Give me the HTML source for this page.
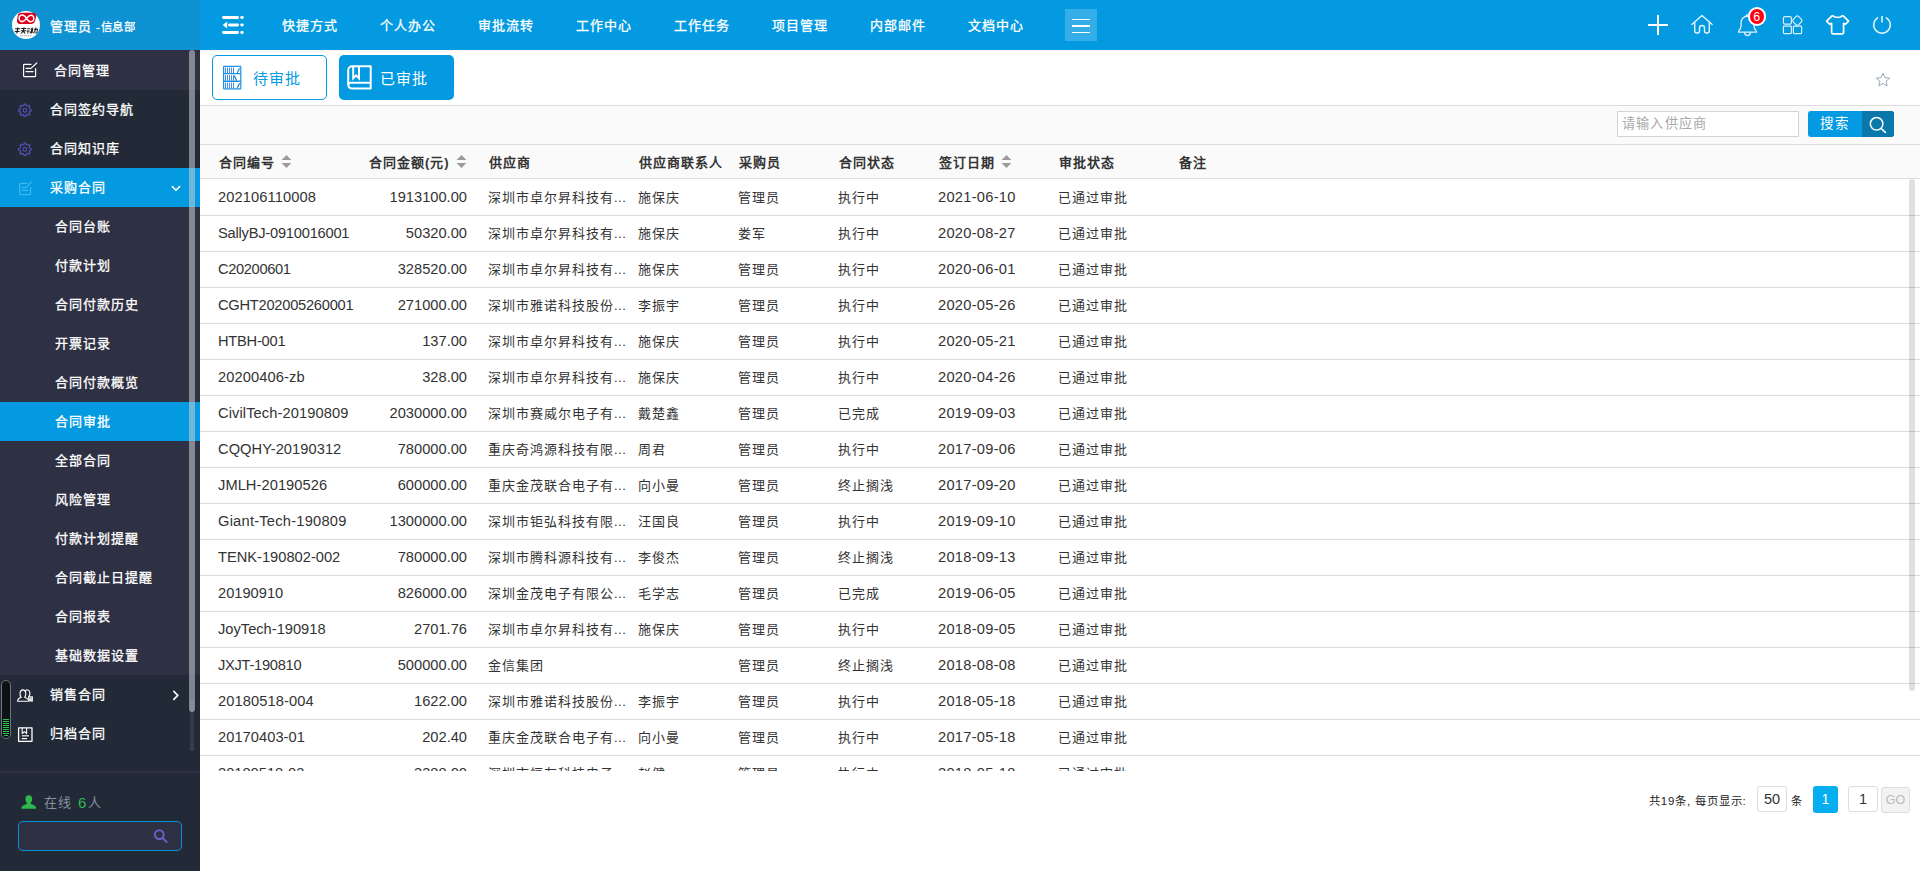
<!DOCTYPE html>
<html lang="zh-CN">
<head>
<meta charset="utf-8">
<title>合同审批</title>
<style>
*{margin:0;padding:0;box-sizing:border-box}
html,body{width:1920px;height:871px;overflow:hidden;background:#fff}
body{position:relative;font-family:"Liberation Sans",sans-serif;font-size:14px;color:#333;-webkit-font-smoothing:antialiased}
.a{position:absolute}
svg{position:absolute;overflow:visible}
.t{position:absolute;white-space:nowrap;line-height:20px;height:20px}
/* top bar */
#top{left:0;top:0;width:1920px;height:50px;background:#039ae1}
#tophdr{left:0;top:0;width:200px;height:50px;background:#0f92d1}
.z{font-size:13px;letter-spacing:1px}
.z16{font-size:15px;letter-spacing:1px}
.z12{font-size:11.2px;letter-spacing:.8px}
.nav{color:#fff;top:16px;-webkit-text-stroke:.3px #fff}
/* sidebar */
#side{left:0;top:50px;width:200px;height:821px;background:#222a37}
.si{position:absolute;left:0;width:200px;height:39px}
.si .t{color:#fff;font-size:13px;letter-spacing:1px;top:10px;-webkit-text-stroke:.3px #fff}
.sub{background:#2e3043}
.act{background:#039ae1}
/* table */
.hd{font-weight:bold;color:#333;font-size:13px;letter-spacing:1px;top:152.5px}
.c{color:#333;font-size:13px;letter-spacing:1px}
.l{font-size:14.66px;letter-spacing:0}
.ln{position:absolute;left:200px;width:1720px;height:1px;background:#dcdcdc}
</style>
</head>
<body>
<div id="top" class="a"></div><div id="tophdr" class="a"></div>
<svg style="left:12px;top:11px" width="28" height="28" viewBox="0 0 28 28">
<circle cx="14" cy="14" r="14" fill="#fff"/>
<path d="M8.6 1.7 H21 a3.2 3.2 0 0 1 3.1 4 l-1.1 4.600 a3.600 3.600 0 0 1 -3.500 2.700 H8 a3 3 0 0 1 -3 -3.600 l.7 -4.600 A3.400 3.400 0 0 1 8.600 1.700z" fill="#d9001b"/>
<path d="M14.5 7.4 C12.8 4.6 10.6 3.6 8.9 4.3 C6.6 5.2 6.4 9 8.6 10.2 C10.6 11.3 12.8 9.9 14.5 7.4 C16.2 4.9 18.3 3.5 20.3 4.5 C22.5 5.6 22.3 9.4 20.1 10.4 C18.3 11.2 16.2 10.2 14.5 7.4z" fill="none" stroke="#fff" stroke-width="1.5"/>
<path d="M2.6 17.2h5.2v1.1h-5.2zM4.6 16.4h1.2v6.2h-1.2zM2.9 20h4.6v1h-4.6z M8.8 17h5v1.1h-5zM8.6 19.2h5.4v1.1h-5.4zM10.7 16.5h1.2v3.2l2 2.8h-1.5l-1.1-1.8-1.2 1.8h-1.4l2-2.8z M14.8 17.2h2.6v1h-2.6zM14.6 19.4h3v1h-3zM15.6 19.6h1v2.8h-1z M18.2 17.6h2.6v4.2q0 .8-.9.8h-.7v-1h.5v-3h-1.5zM19 16.4h1v1.8q0 2.8-1.4 4.4l-.8-.7q1.2-1.4 1.2-3.7z M21.6 17.8h4v3.6q0 1.1-1.1 1.1h-1v-1h.8q.3 0 .3-.3v-2.4h-3zM22.6 16.4h1.1v2.2q0 2.6-1.6 4l-.8-.8q1.3-1.2 1.3-3.2z" fill="#1a1a1a" transform="skewX(-10) translate(3.6 0)"/>
<path d="M8 24.6h12" stroke="#bbb" stroke-width="1.2" stroke-dasharray="1.4 0.6"/>
</svg>
<div class="t" style="left:49.5px;top:16.5px;color:#fff;font-size:13px;letter-spacing:1px;-webkit-text-stroke:.3px #fff">管理员</div>
<div class="t" style="left:96px;top:17px;color:#fff;font-size:11.4px;letter-spacing:.75px;line-height:21px;-webkit-text-stroke:.25px #fff">-信息部</div>
<svg style="left:220px;top:13px" width="26" height="24" viewBox="220 13 26 24" fill="#fff">
<rect x="222" y="16.1" width="17" height="2.8" rx="1.4"/><rect x="240.3" y="16.1" width="3.4" height="2.8" rx="1.4"/>
<rect x="228" y="23.6" width="11" height="2.8" rx="1.4"/><rect x="240.3" y="23.6" width="3.4" height="2.8" rx="1.4"/>
<path d="M222.6 25 L227.2 21.6 V28.4z"/>
<rect x="222" y="31.1" width="17" height="2.8" rx="1.4"/><rect x="240.3" y="31.1" width="3.4" height="2.8" rx="1.4"/>
</svg>
<div class="t nav z" style="left:282px">快捷方式</div>
<div class="t nav z" style="left:380px">个人办公</div>
<div class="t nav z" style="left:478px">审批流转</div>
<div class="t nav z" style="left:576px">工作中心</div>
<div class="t nav z" style="left:674px">工作任务</div>
<div class="t nav z" style="left:772px">项目管理</div>
<div class="t nav z" style="left:870px">内部邮件</div>
<div class="t nav z" style="left:968px">文档中心</div>
<div class="a" style="left:1065px;top:9px;width:32px;height:32px;background:#35aee8"></div>
<div class="a" style="left:1072px;top:18.6px;width:18px;height:1.6px;background:#fff"></div>
<div class="a" style="left:1072px;top:25px;width:18px;height:1.6px;background:#fff"></div>
<div class="a" style="left:1072px;top:31.5px;width:18px;height:1.6px;background:#fff"></div>
<svg style="left:1640px;top:0" width="280" height="50" viewBox="1640 0 280 50" fill="none" stroke="#fff" stroke-linecap="round" stroke-linejoin="round">
<!-- plus -->
<path d="M1648 25H1668M1658 15V35" stroke-width="2" stroke-linecap="butt"/>
<!-- home -->
<g stroke-width="1.4" stroke="#e6f4fc">
<path d="M1691.8 24.4 L1702 15.4 L1712.2 24.4"/>
<path d="M1694.7 22.6 V31 a2 2 0 0 0 2 2 h0.8 a2 2 0 0 0 2 -2 v-3 a2.5 2.5 0 0 1 5 0 v3 a2 2 0 0 0 2 2 h0.8 a2 2 0 0 0 2 -2 V22.6"/>
</g>
<!-- bell -->
<g stroke-width="1.3" stroke="#e6f4fc">
<path d="M1739 32.2 H1756 C1756.6 32.2 1756.8 31.5 1756.4 31.1 C1754.6 29.4 1753.9 27.8 1753.9 25.5 V22.6 C1753.9 19 1751.2 16.2 1747.5 16.2 C1743.8 16.2 1741.1 19 1741.1 22.6 V25.5 C1741.1 27.8 1740.4 29.4 1738.6 31.1 C1738.2 31.5 1738.4 32.2 1739 32.2z"/>
<path d="M1744.6 32.6 a2.9 2.9 0 0 0 5.8 0"/>
<path d="M1746 16.3 a1.5 1.5 0 0 1 3 0"/>
</g>
<!-- apps -->
<g stroke-width="1.2" stroke="#d9effb">
<rect x="1783.4" y="16.6" width="8" height="7.6" rx="1.6"/>
<rect x="1783.4" y="26.2" width="8" height="7.4" rx="0.8"/>
<rect x="1793.4" y="26.2" width="8.2" height="7.4" rx="0.8"/>
<rect x="1793.5" y="16.8" width="7.6" height="7.6" rx="2" transform="rotate(45 1797.3 20.6)"/>
</g>
<!-- tshirt -->
<path d="M1833.4 15.8 C1834.6 18 1840.6 18 1841.8 15.8 H1843.2 L1848.6 21.2 L1845.6 24.2 L1843.6 23.4 V32.6 a1.2 1.2 0 0 1 -1.2 1.2 H1832.8 a1.2 1.2 0 0 1 -1.2 -1.2 V23.4 L1829.6 24.2 L1826.6 21.2 L1832 15.8z" stroke-width="1.7"/>
<!-- power -->
<path d="M1877.6 17.9 A8.3 8.3 0 1 0 1886.4 17.9" stroke-width="1.5" stroke="#e6f4fc"/>
<path d="M1882 16V22.6" stroke-width="2" stroke="#b9e1f6" stroke-linecap="butt"/>
</svg>
<div class="a" style="left:1747.6px;top:7.4px;width:18.2px;height:18.2px;border-radius:50%;background:#fff"></div>
<div class="a" style="left:1749.5px;top:9.3px;width:14.4px;height:14.4px;border-radius:50%;background:#ff0012"></div>
<div class="t" style="left:1749.5px;top:6.5px;width:14.4px;text-align:center;color:#fff;font-size:12.5px">6</div>
<div class="a" style="left:200px;top:50px;width:1720px;height:3px;background:linear-gradient(rgba(120,90,80,.07),rgba(120,90,80,0))"></div>
<div id="side" class="a">
<div class="si" style="top:0;height:40px;background:#2e3043"><div class="t" style="left:54px;top:11px">合同管理</div></div>
<div class="si" style="top:40px"><div class="t" style="left:50px">合同签约导航</div></div>
<div class="si" style="top:79px"><div class="t" style="left:50px">合同知识库</div></div>
<div class="si act" style="top:118px"><div class="t" style="left:50px">采购合同</div></div>
<div class="si sub" style="top:157px"><div class="t" style="left:55px">合同台账</div></div>
<div class="si sub" style="top:196px"><div class="t" style="left:55px">付款计划</div></div>
<div class="si sub" style="top:235px"><div class="t" style="left:55px">合同付款历史</div></div>
<div class="si sub" style="top:274px"><div class="t" style="left:55px">开票记录</div></div>
<div class="si sub" style="top:313px"><div class="t" style="left:55px">合同付款概览</div></div>
<div class="si act" style="top:352px"><div class="t" style="left:55px">合同审批</div></div>
<div class="si sub" style="top:391px"><div class="t" style="left:55px">全部合同</div></div>
<div class="si sub" style="top:430px"><div class="t" style="left:55px">风险管理</div></div>
<div class="si sub" style="top:469px"><div class="t" style="left:55px">付款计划提醒</div></div>
<div class="si sub" style="top:508px"><div class="t" style="left:55px">合同截止日提醒</div></div>
<div class="si sub" style="top:547px"><div class="t" style="left:55px">合同报表</div></div>
<div class="si sub" style="top:586px"><div class="t" style="left:55px">基础数据设置</div></div>
<div class="si" style="top:625px"><div class="t" style="left:50px">销售合同</div></div>
<div class="si" style="top:664px"><div class="t" style="left:50px">归档合同</div></div>
<div class="a" style="left:0;top:721px;width:200px;height:2px;background:#2f2f46"></div>
<div class="t" style="left:44px;top:743px;color:#8790a0;font-size:13px;letter-spacing:1px">在线</div>
<div class="t" style="left:78px;top:743px;color:#2fb84f;font-size:15px">6</div>
<div class="t" style="left:88px;top:743px;color:#8790a0;font-size:13px;letter-spacing:1px">人</div>
<div class="a" style="left:18px;top:771px;width:164px;height:30px;border:1px solid #0992d8;border-radius:5px;background:#2e3043"></div>
<svg style="left:0;top:0" width="200" height="821" viewBox="0 50 200 821" fill="none" stroke-linecap="round" stroke-linejoin="round">
<!-- edit icon header -->
<g stroke="#fff" stroke-width="1.15">
<path d="M31 64.400 H24.100 a.5 .5 0 0 0 -.5 .5 V76.100 a.5 .5 0 0 0 .5 .5 H35.100 a.5 .5 0 0 0 .5 -.5 V68.600"/>
<path d="M26 68.3H30M26 71.6H33.2M30.6 68.6L36.8 63"/>
</g>
<!-- gears -->
<g stroke="#5b53c2" stroke-width="1.05">
<path d="M23.76 105.54 L24.06 104.06 L25.74 104.06 L26.04 105.54 L27.46 106.12 L28.72 105.29 L29.91 106.48 L29.08 107.74 L29.66 109.16 L31.14 109.46 L31.14 111.14 L29.66 111.44 L29.08 112.86 L29.91 114.12 L28.72 115.31 L27.46 114.48 L26.04 115.06 L25.74 116.54 L24.06 116.54 L23.76 115.06 L22.34 114.48 L21.08 115.31 L19.89 114.12 L20.72 112.86 L20.14 111.44 L18.66 111.14 L18.66 109.46 L20.14 109.16 L20.72 107.74 L19.89 106.48 L21.08 105.29 L22.34 106.12z"/>
<circle cx="24.9" cy="110.3" r="1.9"/>
<path d="M23.76 144.54 L24.06 143.06 L25.74 143.06 L26.04 144.54 L27.46 145.12 L28.72 144.29 L29.91 145.48 L29.08 146.74 L29.66 148.16 L31.14 148.46 L31.14 150.14 L29.66 150.44 L29.08 151.86 L29.91 153.12 L28.72 154.31 L27.46 153.48 L26.04 154.06 L25.74 155.54 L24.06 155.54 L23.76 154.06 L22.34 153.48 L21.08 154.31 L19.89 153.12 L20.72 151.86 L20.14 150.44 L18.66 150.14 L18.66 148.46 L20.14 148.16 L20.72 146.74 L19.89 145.48 L21.08 144.29 L22.34 145.12z"/>
<circle cx="24.9" cy="149.3" r="1.9"/>
</g>
<!-- edit icon purchase (light blue) -->
<g stroke="#3fb6ee" stroke-width="1.2">
<path d="M27 183.4 H20.6 a1 1 0 0 0 -1 1 V193.6 a1 1 0 0 0 1 1 H29.6 a1 1 0 0 0 1 -1 V187.6"/>
<path d="M22 187.3H25.6M22 190.4H28M26 187.6L31.4 182"/>
</g>
<!-- chevron down -->
<path d="M172.4 186.6 L176 190.2 L179.6 186.6" stroke="#fff" stroke-width="1.6"/>
<!-- chevron right -->
<path d="M173.8 691.4 L177.8 695.4 L173.8 699.4" stroke="#fff" stroke-width="1.6"/>
<!-- users icon -->
<g stroke="#fff" stroke-width="1.1">
<path d="M17.6 701.2 c0 -2.2 1.6 -3.2 3.6 -3.9 c-1.7 -1.6 -1.9 -7.4 1.7 -7.4 c3.6 0 3.4 5.8 1.7 7.4 c1.4 .5 2.4 1 3 1.9 M17.6 701.2 H27.6"/>
<path d="M25.6 690.4 c1.1 -.8 2.9 -.6 3.7 .6 c1 1.500 .7 4.300 -.6 5.600"/>
</g>
<rect x="28" y="696.2" width="5" height="5.4" fill="#e4e4e4" stroke="none"/>
<rect x="29" y="697.4" width="3" height="1" fill="#999" stroke="none"/>
<!-- archive icon -->
<g stroke="#fff" stroke-width="1.3">
<rect x="18.6" y="727.9" width="13.4" height="13.4"/>
<path d="M22.2 728 V733.6 L24.4 731.6 L26.6 733.6 V728" stroke-width="1.1"/>
<path d="M21.8 735.8 H29" stroke="#ddd" stroke-width="1.4" stroke-linecap="butt"/>
<path d="M21.8 738.6 H27" stroke="#fff" stroke-width="1.2" stroke-linecap="butt"/>
</g>
<!-- online user icon -->
<path d="M28.8 795.2 c2.6 0 3.4 2 3.4 3.800 c0 1.700 -.7 2.900 -1.500 3.700 c-.3 .9 .5 1.300 1.800 1.800 c2.200 .9 3.500 1.500 3.800 4.300 H21.300 c.3 -2.800 1.600 -3.400 3.800 -4.300 c1.300 -.5 2.100 -.9 1.800 -1.800 c-.8 -.8 -1.500 -2 -1.500 -3.700 c0 -1.800 .8 -3.800 3.400 -3.800z" fill="#2eb84e" stroke="none"/>
<!-- search icon -->
<g stroke="#6a5fc4" stroke-width="2">
<circle cx="159.300" cy="834.600" r="4.400"/>
<path d="M162.800 838.100 L166.600 842"/>
</g>
</svg>
</div>
<div class="a" style="left:190px;top:700px;width:4px;height:51px;background:#343d49"></div>
<div class="a" style="left:189px;top:50px;width:6px;height:662px;background:rgba(206,208,214,0.55);border-radius:3px"></div>
<div class="a" style="left:1px;top:680px;width:10px;height:59px;border:1px solid #70757d;border-radius:5px;background:#0d1116"></div>
<div class="a" style="left:3px;top:719px;width:6px;height:1px;background:#2fc24f"></div>
<div class="a" style="left:3px;top:721px;width:6px;height:1px;background:#2fc24f"></div>
<div class="a" style="left:3px;top:723px;width:6px;height:1px;background:#2fc24f"></div>
<div class="a" style="left:3px;top:725px;width:6px;height:1px;background:#2fc24f"></div>
<div class="a" style="left:3px;top:727px;width:6px;height:1px;background:#2fc24f"></div>
<div class="a" style="left:3px;top:729px;width:6px;height:1px;background:#2fc24f"></div>
<div class="a" style="left:3px;top:731px;width:6px;height:1px;background:#2fc24f"></div>
<div class="a" style="left:3px;top:733px;width:6px;height:1px;background:#2fc24f"></div>
<div class="a" style="left:4px;top:735px;width:4px;height:1px;background:#2fc24f"></div>
<div class="a" style="left:212px;top:55px;width:115px;height:45px;border:1px solid #039ae1;border-radius:5px;background:#fff"></div>
<div class="a" style="left:339px;top:55px;width:115px;height:45px;border-radius:5px;background:#039ae1"></div>
<div class="t" style="left:253px;top:68px;font-size:15px;letter-spacing:1px;color:#039ae1;line-height:22px;height:22px">待审批</div>
<div class="t" style="left:380px;top:68px;font-size:15px;letter-spacing:1px;color:#fff;line-height:22px;height:22px">已审批</div>
<svg style="left:222px;top:64px" width="22" height="28" viewBox="222 64 22 28" fill="none" stroke="#1c8fe0" stroke-width="1.2"><rect x="223.6" y="66.4" width="17.2" height="22.4" rx="0.6"/><path d="M223.6 73.6H240.8M223.6 81.2H240.8" stroke-width="1.4"/><path d="M225.5 67.6V73" stroke="#3f8de6" stroke-width="1"/><path d="M227.5 67.6V73" stroke="#3f8de6" stroke-width="1"/><path d="M229.5 67.6V73" stroke="#3f8de6" stroke-width="1"/><path d="M231.5 67.6V73" stroke="#3f8de6" stroke-width="1"/><path d="M233.5 67.6V73" stroke="#3f8de6" stroke-width="1"/><path d="M237.2 73L239.6 68.19999999999999" stroke-width="1.3"/><path d="M225.5 75.2V80.6" stroke="#3f8de6" stroke-width="1"/><path d="M227.5 75.2V80.6" stroke="#3f8de6" stroke-width="1"/><path d="M229.5 75.2V80.6" stroke="#3f8de6" stroke-width="1"/><path d="M231.5 75.2V80.6" stroke="#3f8de6" stroke-width="1"/><path d="M233.5 75.2V80.6" stroke="#3f8de6" stroke-width="1"/><path d="M234.2 75.60000000000001L236.6 80.6" stroke-width="1.3"/><path d="M225.5 82.6V88" stroke="#3f8de6" stroke-width="1"/><path d="M227.5 82.6V88" stroke="#3f8de6" stroke-width="1"/><path d="M229.5 82.6V88" stroke="#3f8de6" stroke-width="1"/><path d="M231.5 82.6V88" stroke="#3f8de6" stroke-width="1"/><path d="M233.5 82.6V88" stroke="#3f8de6" stroke-width="1"/><path d="M237.2 88L239.6 83.19999999999999" stroke-width="1.3"/></svg>
<svg style="left:346px;top:64px" width="28" height="28" viewBox="346 64 28 28" fill="none" stroke="#fff" stroke-width="2" stroke-linejoin="round">
<path d="M370.700 66.200 H352.200 a4 4 0 0 0 -4 4 V84.600 a4 4 0 0 0 4 4 H370.700z"/>
<path d="M348.400 84.800 a2.200 2.200 0 0 1 2.200 -2 H370.500"/>
<path d="M353.200 66.400 V78.400 L356.100 75.400 L359 78.400 V66.400" stroke-linejoin="miter"/>
</svg>
<svg style="left:1875px;top:71.5px" width="16" height="16" viewBox="0 0 16 16" fill="none" stroke="#9aa7bd" stroke-width="1">
<path d="M8 1.300 L9.900 5.700 L14.700 6.100 L11.100 9.200 L12.200 13.900 L8 11.400 L3.800 13.900 L4.900 9.200 L1.300 6.100 L6.100 5.700z"/></svg>
<div class="a" style="left:200px;top:105px;width:1720px;height:74px;background:#fafafa"></div>
<div class="ln" style="top:105px"></div>
<div class="ln" style="top:144px"></div>
<div class="ln" style="top:178px"></div>
<div class="a" style="left:1617px;top:111px;width:182px;height:26px;border:1px solid #d4d4d4;background:#fff"></div>
<div class="t" style="left:1621.5px;top:114px;color:#a9a9a9;font-size:13.2px;letter-spacing:1.35px">请输入供应商</div>
<div class="a" style="left:1808px;top:111px;width:86px;height:26px;border-radius:3px;background:#039ae1;overflow:hidden"><div class="a" style="left:54px;top:0;width:32px;height:26px;background:#0b78ab"></div></div>
<div class="t" style="left:1820px;top:114px;color:#fff;font-size:13.5px;letter-spacing:1.6px">搜索</div>
<svg style="left:1866px;top:113px" width="24" height="24" viewBox="1866 113 24 24" fill="none" stroke="#fff" stroke-width="1.5" stroke-linecap="round">
<circle cx="1876.600" cy="123.800" r="6.300"/><path d="M1881.300 128.600 L1885.400 132.400"/></svg>
<div class="t hd" style="left:219px">合同编号</div>
<div class="t hd" style="left:369px">合同金额(元)</div>
<div class="t hd" style="left:489px">供应商</div>
<div class="t hd" style="left:639px">供应商联系人</div>
<div class="t hd" style="left:739px">采购员</div>
<div class="t hd" style="left:839px">合同状态</div>
<div class="t hd" style="left:939px">签订日期</div>
<div class="t hd" style="left:1059px">审批状态</div>
<div class="t hd" style="left:1179px">备注</div>
<svg style="left:280.5px;top:154px" width="11" height="15" viewBox="0 0 11 15"><path d="M0.6 6.100 L5.500 1 L10.400 6.100z M0.600 8.900 L5.500 14 L10.400 8.900z" fill="#9b9b9b"/></svg>
<svg style="left:455.5px;top:154px" width="11" height="15" viewBox="0 0 11 15"><path d="M0.6 6.100 L5.500 1 L10.400 6.100z M0.600 8.900 L5.500 14 L10.400 8.900z" fill="#9b9b9b"/></svg>
<svg style="left:1000.5px;top:154px" width="11" height="15" viewBox="0 0 11 15"><path d="M0.6 6.100 L5.500 1 L10.400 6.100z M0.600 8.900 L5.500 14 L10.400 8.900z" fill="#9b9b9b"/></svg>
<div class="a" style="left:200px;top:179px;width:1720px;height:592px;overflow:hidden">
<div class="a" style="left:0;top:0px;width:1720px;height:36px">
<div class="t c l" style="left:18px;top:8px;letter-spacing:0.1px">202106110008</div>
<div class="t c l" style="right:1453px;top:8px">1913100.00</div>
<div class="t c" style="left:288px;top:8.5px">深圳市卓尔昇科技有<span style="letter-spacing:.5px">...</span></div>
<div class="t c" style="left:438px;top:8.5px">施保庆</div>
<div class="t c" style="left:538px;top:8.5px">管理员</div>
<div class="t c" style="left:638px;top:8.5px">执行中</div>
<div class="t c l" style="left:738px;top:8px;letter-spacing:.27px">2021-06-10</div>
<div class="t c" style="left:858px;top:8.5px">已通过审批</div>
</div>
<div class="a" style="left:0;top:36px;width:1720px;height:1px;background:#dcdcdc"></div>
<div class="a" style="left:0;top:36px;width:1720px;height:36px">
<div class="t c l" style="left:18px;top:8px;letter-spacing:-0.22px">SallyBJ-0910016001</div>
<div class="t c l" style="right:1453px;top:8px">50320.00</div>
<div class="t c" style="left:288px;top:8.5px">深圳市卓尔昇科技有<span style="letter-spacing:.5px">...</span></div>
<div class="t c" style="left:438px;top:8.5px">施保庆</div>
<div class="t c" style="left:538px;top:8.5px">娄军</div>
<div class="t c" style="left:638px;top:8.5px">执行中</div>
<div class="t c l" style="left:738px;top:8px;letter-spacing:.27px">2020-08-27</div>
<div class="t c" style="left:858px;top:8.5px">已通过审批</div>
</div>
<div class="a" style="left:0;top:72px;width:1720px;height:1px;background:#dcdcdc"></div>
<div class="a" style="left:0;top:72px;width:1720px;height:36px">
<div class="t c l" style="left:18px;top:8px;letter-spacing:-0.36px">C20200601</div>
<div class="t c l" style="right:1453px;top:8px">328520.00</div>
<div class="t c" style="left:288px;top:8.5px">深圳市卓尔昇科技有<span style="letter-spacing:.5px">...</span></div>
<div class="t c" style="left:438px;top:8.5px">施保庆</div>
<div class="t c" style="left:538px;top:8.5px">管理员</div>
<div class="t c" style="left:638px;top:8.5px">执行中</div>
<div class="t c l" style="left:738px;top:8px;letter-spacing:.27px">2020-06-01</div>
<div class="t c" style="left:858px;top:8.5px">已通过审批</div>
</div>
<div class="a" style="left:0;top:108px;width:1720px;height:1px;background:#dcdcdc"></div>
<div class="a" style="left:0;top:108px;width:1720px;height:36px">
<div class="t c l" style="left:18px;top:8px;letter-spacing:-0.25px">CGHT202005260001</div>
<div class="t c l" style="right:1453px;top:8px">271000.00</div>
<div class="t c" style="left:288px;top:8.5px">深圳市雅诺科技股份<span style="letter-spacing:.5px">...</span></div>
<div class="t c" style="left:438px;top:8.5px">李振宇</div>
<div class="t c" style="left:538px;top:8.5px">管理员</div>
<div class="t c" style="left:638px;top:8.5px">执行中</div>
<div class="t c l" style="left:738px;top:8px;letter-spacing:.27px">2020-05-26</div>
<div class="t c" style="left:858px;top:8.5px">已通过审批</div>
</div>
<div class="a" style="left:0;top:144px;width:1720px;height:1px;background:#dcdcdc"></div>
<div class="a" style="left:0;top:144px;width:1720px;height:36px">
<div class="t c l" style="left:18px;top:8px;letter-spacing:-0.24px">HTBH-001</div>
<div class="t c l" style="right:1453px;top:8px">137.00</div>
<div class="t c" style="left:288px;top:8.5px">深圳市卓尔昇科技有<span style="letter-spacing:.5px">...</span></div>
<div class="t c" style="left:438px;top:8.5px">施保庆</div>
<div class="t c" style="left:538px;top:8.5px">管理员</div>
<div class="t c" style="left:638px;top:8.5px">执行中</div>
<div class="t c l" style="left:738px;top:8px;letter-spacing:.27px">2020-05-21</div>
<div class="t c" style="left:858px;top:8.5px">已通过审批</div>
</div>
<div class="a" style="left:0;top:180px;width:1720px;height:1px;background:#dcdcdc"></div>
<div class="a" style="left:0;top:180px;width:1720px;height:36px">
<div class="t c l" style="left:18px;top:8px;letter-spacing:0.1px">20200406-zb</div>
<div class="t c l" style="right:1453px;top:8px">328.00</div>
<div class="t c" style="left:288px;top:8.5px">深圳市卓尔昇科技有<span style="letter-spacing:.5px">...</span></div>
<div class="t c" style="left:438px;top:8.5px">施保庆</div>
<div class="t c" style="left:538px;top:8.5px">管理员</div>
<div class="t c" style="left:638px;top:8.5px">执行中</div>
<div class="t c l" style="left:738px;top:8px;letter-spacing:.27px">2020-04-26</div>
<div class="t c" style="left:858px;top:8.5px">已通过审批</div>
</div>
<div class="a" style="left:0;top:216px;width:1720px;height:1px;background:#dcdcdc"></div>
<div class="a" style="left:0;top:216px;width:1720px;height:36px">
<div class="t c l" style="left:18px;top:8px;letter-spacing:0.1px">CivilTech-20190809</div>
<div class="t c l" style="right:1453px;top:8px">2030000.00</div>
<div class="t c" style="left:288px;top:8.5px">深圳市赛威尔电子有<span style="letter-spacing:.5px">...</span></div>
<div class="t c" style="left:438px;top:8.5px">戴楚鑫</div>
<div class="t c" style="left:538px;top:8.5px">管理员</div>
<div class="t c" style="left:638px;top:8.5px">已完成</div>
<div class="t c l" style="left:738px;top:8px;letter-spacing:.27px">2019-09-03</div>
<div class="t c" style="left:858px;top:8.5px">已通过审批</div>
</div>
<div class="a" style="left:0;top:252px;width:1720px;height:1px;background:#dcdcdc"></div>
<div class="a" style="left:0;top:252px;width:1720px;height:36px">
<div class="t c l" style="left:18px;top:8px;letter-spacing:0.06px">CQQHY-20190312</div>
<div class="t c l" style="right:1453px;top:8px">780000.00</div>
<div class="t c" style="left:288px;top:8.5px">重庆奇鸿源科技有限<span style="letter-spacing:.5px">...</span></div>
<div class="t c" style="left:438px;top:8.5px">周君</div>
<div class="t c" style="left:538px;top:8.5px">管理员</div>
<div class="t c" style="left:638px;top:8.5px">执行中</div>
<div class="t c l" style="left:738px;top:8px;letter-spacing:.27px">2017-09-06</div>
<div class="t c" style="left:858px;top:8.5px">已通过审批</div>
</div>
<div class="a" style="left:0;top:288px;width:1720px;height:1px;background:#dcdcdc"></div>
<div class="a" style="left:0;top:288px;width:1720px;height:36px">
<div class="t c l" style="left:18px;top:8px;letter-spacing:0.06px">JMLH-20190526</div>
<div class="t c l" style="right:1453px;top:8px">600000.00</div>
<div class="t c" style="left:288px;top:8.5px">重庆金茂联合电子有<span style="letter-spacing:.5px">...</span></div>
<div class="t c" style="left:438px;top:8.5px">向小曼</div>
<div class="t c" style="left:538px;top:8.5px">管理员</div>
<div class="t c" style="left:638px;top:8.5px">终止搁浅</div>
<div class="t c l" style="left:738px;top:8px;letter-spacing:.27px">2017-09-20</div>
<div class="t c" style="left:858px;top:8.5px">已通过审批</div>
</div>
<div class="a" style="left:0;top:324px;width:1720px;height:1px;background:#dcdcdc"></div>
<div class="a" style="left:0;top:324px;width:1720px;height:36px">
<div class="t c l" style="left:18px;top:8px;letter-spacing:0.23px">Giant-Tech-190809</div>
<div class="t c l" style="right:1453px;top:8px">1300000.00</div>
<div class="t c" style="left:288px;top:8.5px">深圳市钜弘科技有限<span style="letter-spacing:.5px">...</span></div>
<div class="t c" style="left:438px;top:8.5px">汪国良</div>
<div class="t c" style="left:538px;top:8.5px">管理员</div>
<div class="t c" style="left:638px;top:8.5px">执行中</div>
<div class="t c l" style="left:738px;top:8px;letter-spacing:.27px">2019-09-10</div>
<div class="t c" style="left:858px;top:8.5px">已通过审批</div>
</div>
<div class="a" style="left:0;top:360px;width:1720px;height:1px;background:#dcdcdc"></div>
<div class="a" style="left:0;top:360px;width:1720px;height:36px">
<div class="t c l" style="left:18px;top:8px;letter-spacing:0px">TENK-190802-002</div>
<div class="t c l" style="right:1453px;top:8px">780000.00</div>
<div class="t c" style="left:288px;top:8.5px">深圳市腾科源科技有<span style="letter-spacing:.5px">...</span></div>
<div class="t c" style="left:438px;top:8.5px">李俊杰</div>
<div class="t c" style="left:538px;top:8.5px">管理员</div>
<div class="t c" style="left:638px;top:8.5px">终止搁浅</div>
<div class="t c l" style="left:738px;top:8px;letter-spacing:.27px">2018-09-13</div>
<div class="t c" style="left:858px;top:8.5px">已通过审批</div>
</div>
<div class="a" style="left:0;top:396px;width:1720px;height:1px;background:#dcdcdc"></div>
<div class="a" style="left:0;top:396px;width:1720px;height:36px">
<div class="t c l" style="left:18px;top:8px;letter-spacing:0px">20190910</div>
<div class="t c l" style="right:1453px;top:8px">826000.00</div>
<div class="t c" style="left:288px;top:8.5px">深圳金茂电子有限公<span style="letter-spacing:.5px">...</span></div>
<div class="t c" style="left:438px;top:8.5px">毛学志</div>
<div class="t c" style="left:538px;top:8.5px">管理员</div>
<div class="t c" style="left:638px;top:8.5px">已完成</div>
<div class="t c l" style="left:738px;top:8px;letter-spacing:.27px">2019-06-05</div>
<div class="t c" style="left:858px;top:8.5px">已通过审批</div>
</div>
<div class="a" style="left:0;top:432px;width:1720px;height:1px;background:#dcdcdc"></div>
<div class="a" style="left:0;top:432px;width:1720px;height:36px">
<div class="t c l" style="left:18px;top:8px;letter-spacing:0px">JoyTech-190918</div>
<div class="t c l" style="right:1453px;top:8px">2701.76</div>
<div class="t c" style="left:288px;top:8.5px">深圳市卓尔昇科技有<span style="letter-spacing:.5px">...</span></div>
<div class="t c" style="left:438px;top:8.5px">施保庆</div>
<div class="t c" style="left:538px;top:8.5px">管理员</div>
<div class="t c" style="left:638px;top:8.5px">执行中</div>
<div class="t c l" style="left:738px;top:8px;letter-spacing:.27px">2018-09-05</div>
<div class="t c" style="left:858px;top:8.5px">已通过审批</div>
</div>
<div class="a" style="left:0;top:468px;width:1720px;height:1px;background:#dcdcdc"></div>
<div class="a" style="left:0;top:468px;width:1720px;height:36px">
<div class="t c l" style="left:18px;top:8px;letter-spacing:-0.28px">JXJT-190810</div>
<div class="t c l" style="right:1453px;top:8px">500000.00</div>
<div class="t c" style="left:288px;top:8.5px">金信集团</div>
<div class="t c" style="left:538px;top:8.5px">管理员</div>
<div class="t c" style="left:638px;top:8.5px">终止搁浅</div>
<div class="t c l" style="left:738px;top:8px;letter-spacing:.27px">2018-08-08</div>
<div class="t c" style="left:858px;top:8.5px">已通过审批</div>
</div>
<div class="a" style="left:0;top:504px;width:1720px;height:1px;background:#dcdcdc"></div>
<div class="a" style="left:0;top:504px;width:1720px;height:36px">
<div class="t c l" style="left:18px;top:8px;letter-spacing:0.11px">20180518-004</div>
<div class="t c l" style="right:1453px;top:8px">1622.00</div>
<div class="t c" style="left:288px;top:8.5px">深圳市雅诺科技股份<span style="letter-spacing:.5px">...</span></div>
<div class="t c" style="left:438px;top:8.5px">李振宇</div>
<div class="t c" style="left:538px;top:8.5px">管理员</div>
<div class="t c" style="left:638px;top:8.5px">执行中</div>
<div class="t c l" style="left:738px;top:8px;letter-spacing:.27px">2018-05-18</div>
<div class="t c" style="left:858px;top:8.5px">已通过审批</div>
</div>
<div class="a" style="left:0;top:540px;width:1720px;height:1px;background:#dcdcdc"></div>
<div class="a" style="left:0;top:540px;width:1720px;height:36px">
<div class="t c l" style="left:18px;top:8px;letter-spacing:0.05px">20170403-01</div>
<div class="t c l" style="right:1453px;top:8px">202.40</div>
<div class="t c" style="left:288px;top:8.5px">重庆金茂联合电子有<span style="letter-spacing:.5px">...</span></div>
<div class="t c" style="left:438px;top:8.5px">向小曼</div>
<div class="t c" style="left:538px;top:8.5px">管理员</div>
<div class="t c" style="left:638px;top:8.5px">执行中</div>
<div class="t c l" style="left:738px;top:8px;letter-spacing:.27px">2017-05-18</div>
<div class="t c" style="left:858px;top:8.5px">已通过审批</div>
</div>
<div class="a" style="left:0;top:576px;width:1720px;height:1px;background:#dcdcdc"></div>
<div class="a" style="left:0;top:576px;width:1720px;height:36px">
<div class="t c l" style="left:18px;top:8px;letter-spacing:0px">20180518-03</div>
<div class="t c l" style="right:1453px;top:8px">3388.00</div>
<div class="t c" style="left:288px;top:8.5px">深圳市恒友科技电子<span style="letter-spacing:.5px">...</span></div>
<div class="t c" style="left:438px;top:8.5px">赵健</div>
<div class="t c" style="left:538px;top:8.5px">管理员</div>
<div class="t c" style="left:638px;top:8.5px">执行中</div>
<div class="t c l" style="left:738px;top:8px;letter-spacing:.27px">2018-05-18</div>
<div class="t c" style="left:858px;top:8.5px">已通过审批</div>
</div>
<div class="a" style="left:0;top:612px;width:1720px;height:1px;background:#dcdcdc"></div>
</div>
<div class="a" style="left:1909px;top:179px;width:6px;height:512px;background:rgba(0,0,0,0.12);border-radius:3px"></div>
<div class="t" style="left:1649px;top:791px;font-size:11.4px;letter-spacing:.85px;color:#222">共19条, 每页显示:</div>
<div class="a" style="left:1757px;top:786px;width:30px;height:26px;border:1px solid #ddd;border-radius:3px;background:#fff"></div>
<div class="t" style="left:1757px;top:789px;width:30px;text-align:center;font-size:14.5px;color:#333">50</div>
<div class="t" style="left:1791px;top:791px;font-size:11.2px;letter-spacing:.8px;color:#222">条</div>
<div class="a" style="left:1813px;top:786px;width:25px;height:27px;border-radius:3px;background:#04aeef"></div>
<div class="t" style="left:1813px;top:789px;width:25px;text-align:center;font-size:14px;color:#fff">1</div>
<div class="a" style="left:1848px;top:786px;width:30px;height:26px;border:1px solid #ddd;border-radius:3px;background:#fff"></div>
<div class="t" style="left:1848px;top:789px;width:30px;text-align:center;font-size:14.5px;color:#333">1</div>
<div class="a" style="left:1881px;top:787px;width:29px;height:26px;border:1px solid #ddd;border-radius:3px;background:#f2f2f2"></div>
<div class="t" style="left:1881px;top:790px;width:29px;text-align:center;font-size:12.5px;color:#bbb">GO</div>
</body>
</html>
